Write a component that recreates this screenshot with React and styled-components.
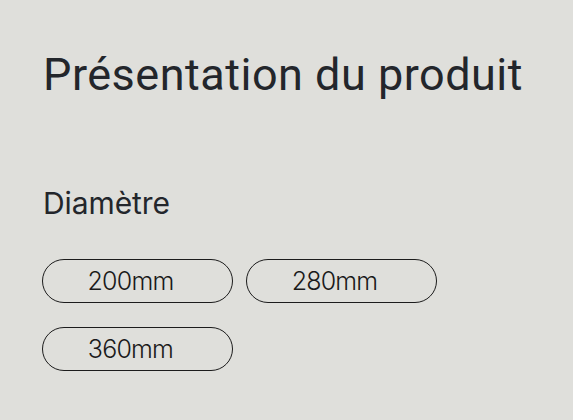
import React from "react";
import styled, { createGlobalStyle } from "styled-components";

const Global = createGlobalStyle`
  html, body {
    margin: 0;
    padding: 0;
    background: #dfdfdb;
  }
  body {
    font-family: Roboto, "Noto Sans", sans-serif;
    color: #23262b;
  }
`;

const Page = styled.main`
  box-sizing: border-box;
  width: 573px;
  min-height: 420px;
  padding: 48px 42px 0 42px;
  background: #dfdfdb;
`;

const Title = styled.h1`
  margin: 0 0 83px 1px;
  font-family: Roboto, "Noto Sans", sans-serif;
  font-size: 45px;
  line-height: 54px;
  font-weight: 400;
  letter-spacing: 0.5px;
  white-space: nowrap;
  color: #23262b;
`;

const Label = styled.h2`
  margin: 0 0 38px 1px;
  font-family: Inter, "Noto Sans", sans-serif;
  font-size: 30px;
  line-height: 36px;
  font-weight: 400;
  letter-spacing: -0.1px;
  color: #23262b;
`;

const Options = styled.div`
  display: grid;
  grid-template-columns: repeat(2, 191px);
  column-gap: 13px;
  row-gap: 24px;
`;

const Option = styled.button`
  box-sizing: border-box;
  height: 44px;
  display: flex;
  align-items: center;
  justify-content: center;
  padding: 0 14px 0 0;
  background: transparent;
  border: 1px solid #1c1c1c;
  border-radius: 22px;
  font-family: Inter, "Noto Sans", sans-serif;
  font-size: 25px;
  font-weight: 300;
  letter-spacing: -0.8px;
  color: #1a1a1a;
  cursor: pointer;
`;

const sizes = ["200mm", "280mm", "360mm"];

export default function App() {
  return (
    <>
      <Global />
      <Page>
        <Title>Présentation du produit</Title>
        <Label>Diamètre</Label>
        <Options>
          {sizes.map((s) => (
            <Option key={s}>{s}</Option>
          ))}
        </Options>
      </Page>
    </>
  );
}
